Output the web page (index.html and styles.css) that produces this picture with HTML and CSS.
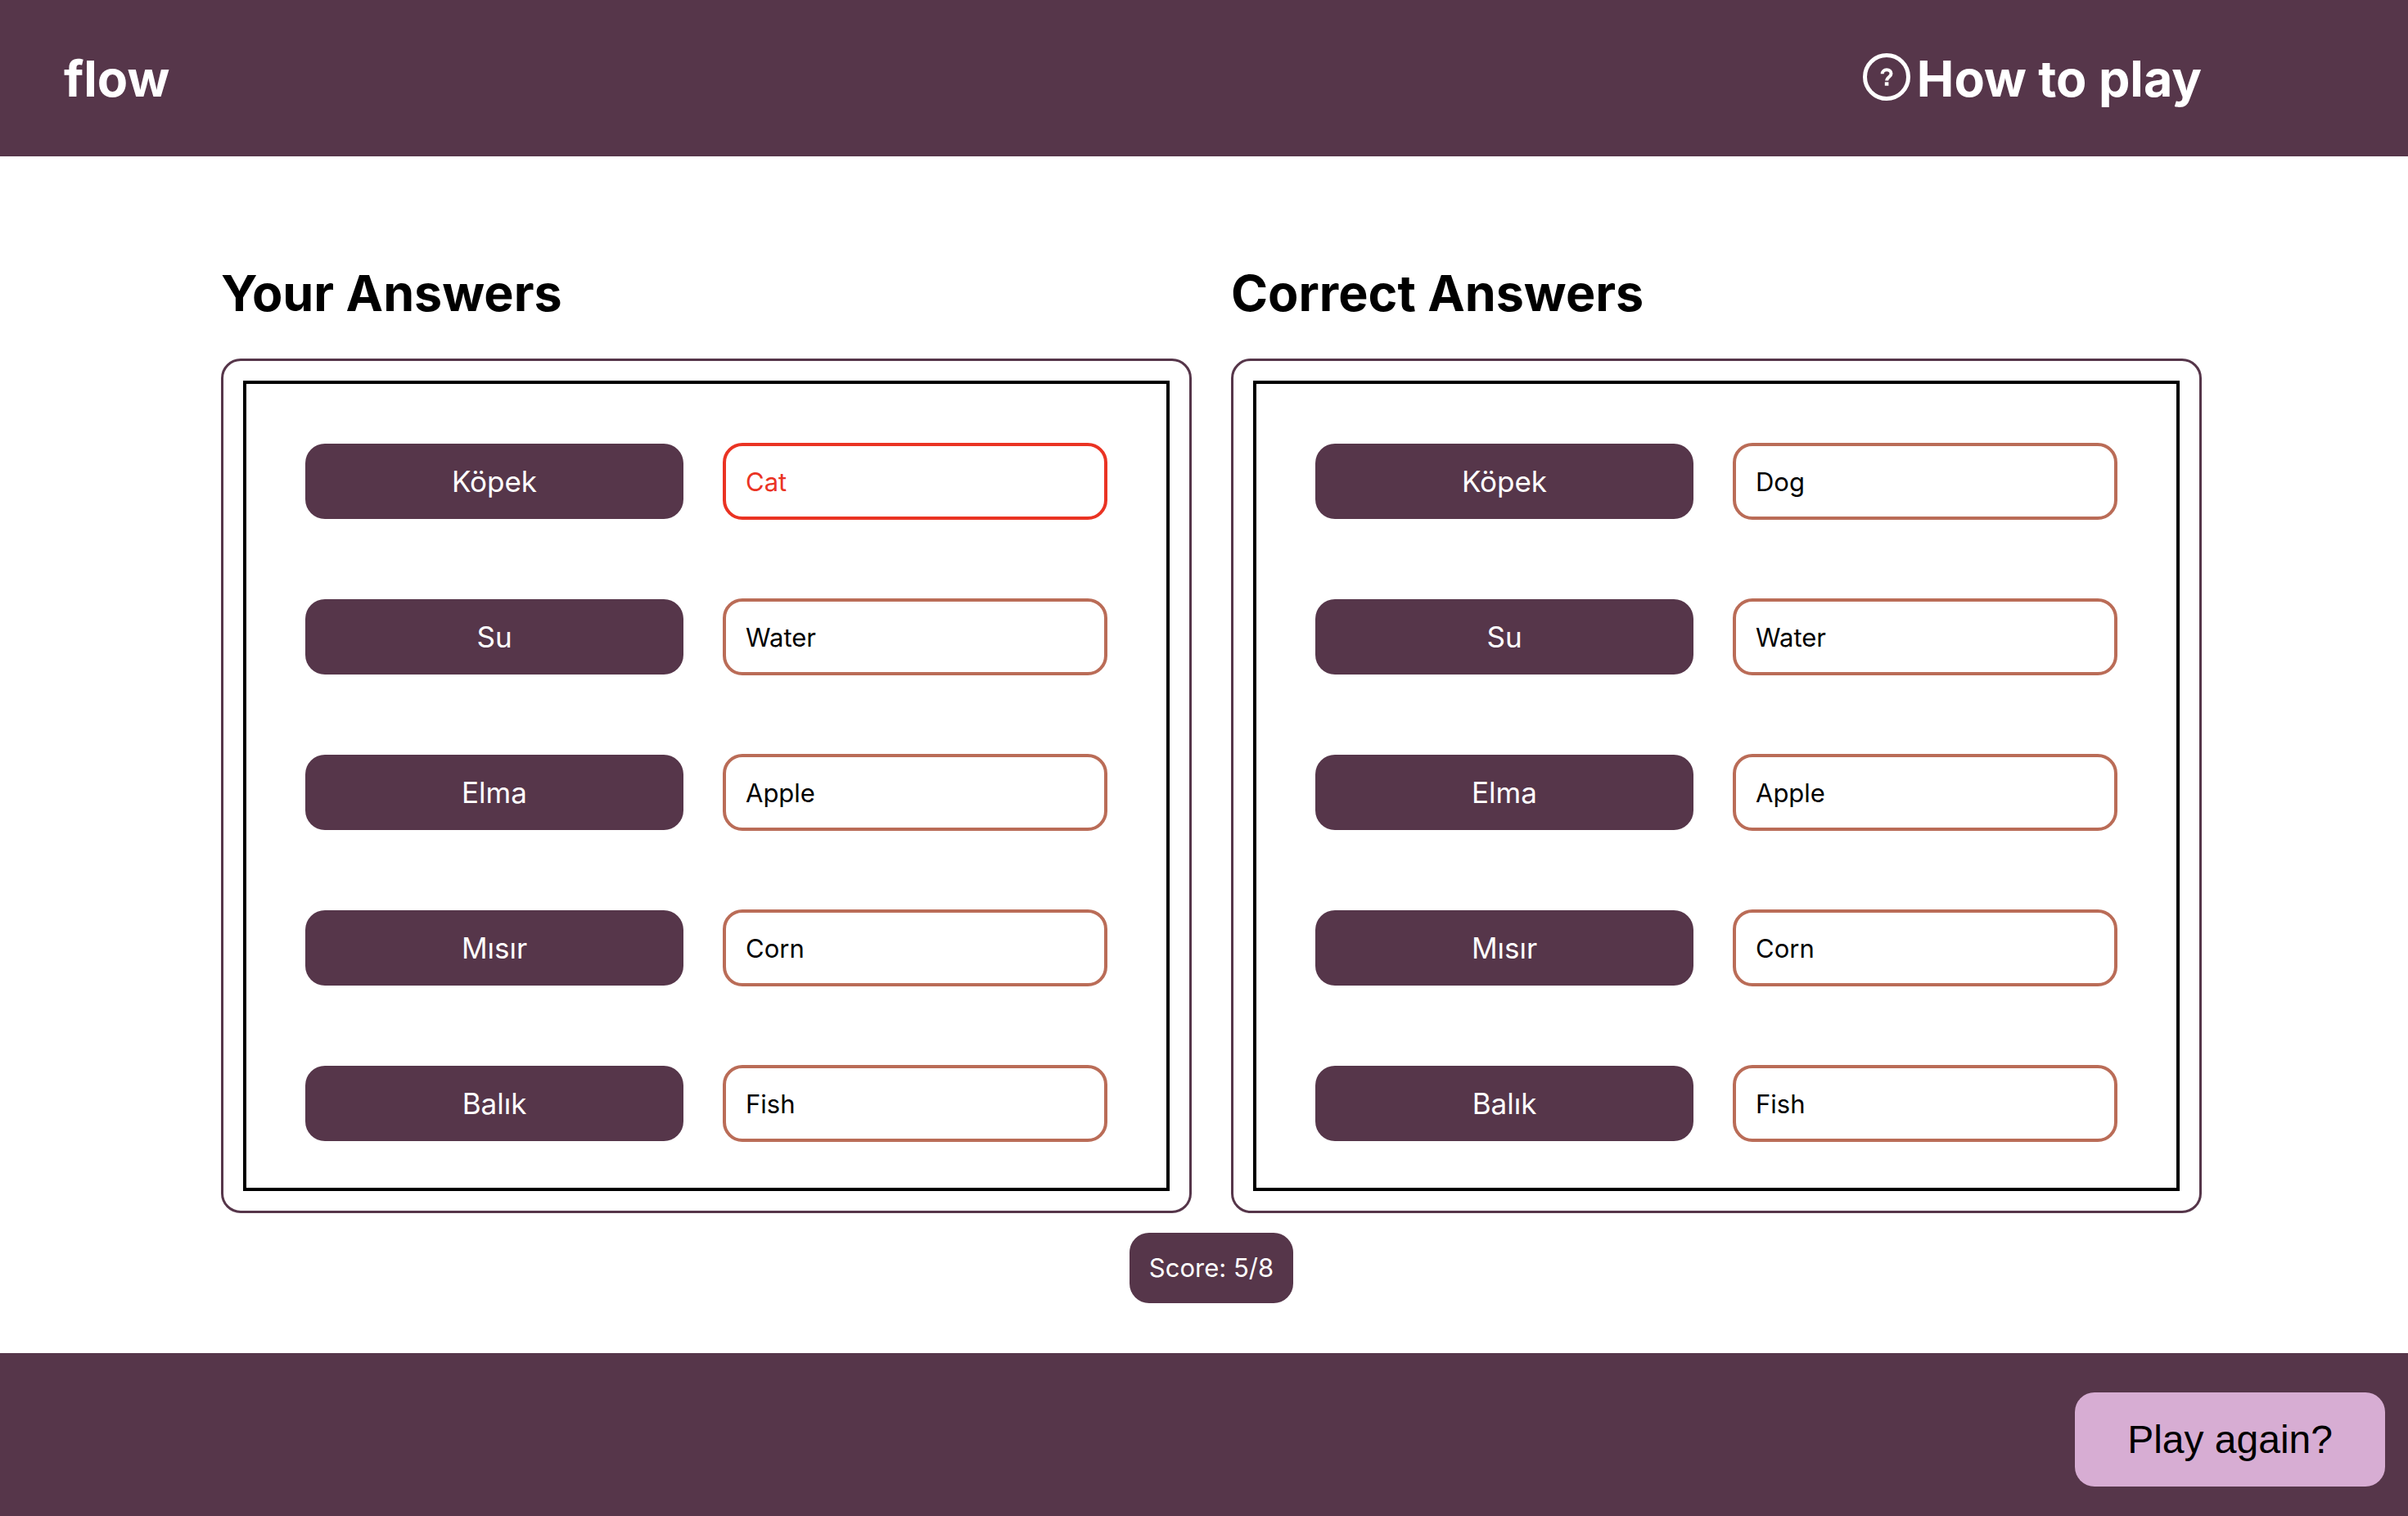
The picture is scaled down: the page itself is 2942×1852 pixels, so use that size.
FILE: index.html
```html
<!DOCTYPE html>
<html lang="en">
<head>
  <meta charset="utf-8">
  <meta name="viewport" content="width=device-width, initial-scale=1">
  <title>flow</title>
  <link rel="stylesheet" href="styles.css">
</head>
<body>
  <header class="site-header">
    <a class="brand" href="#">flow</a>
    <a class="help" href="#">
      <svg class="help-icon" viewBox="0 0 58 58" fill="none" stroke="currentColor" aria-hidden="true">
        <circle cx="29" cy="29" r="26.5" stroke-width="5"/>
        <path d="M23.7 25.3c0-3 2.2-5 5.4-5s5.4 1.9 5.4 4.7c0 4-5.3 4-5.3 8.6" stroke-width="4"/>
        <path d="M26.8 37.5h4.6" stroke-width="4.4"/>
      </svg>
      How to play
    </a>
  </header>

  <main class="results">
    <div class="columns">
      <section class="column">
        <h2 class="column-title">Your Answers</h2>
        <div class="panel">
          <div class="answers">
            <div class="pair"><label class="word" for="your-1">Köpek</label><input class="answer answer-wrong" id="your-1" value="Cat" readonly></div>
            <div class="pair"><label class="word" for="your-2">Su</label><input class="answer" id="your-2" value="Water" readonly></div>
            <div class="pair"><label class="word" for="your-3">Elma</label><input class="answer" id="your-3" value="Apple" readonly></div>
            <div class="pair"><label class="word" for="your-4">Mısır</label><input class="answer" id="your-4" value="Corn" readonly></div>
            <div class="pair"><label class="word" for="your-5">Balık</label><input class="answer" id="your-5" value="Fish" readonly></div>
          </div>
        </div>
      </section>
      <section class="column">
        <h2 class="column-title">Correct Answers</h2>
        <div class="panel">
          <div class="answers">
            <div class="pair"><label class="word" for="correct-1">Köpek</label><input class="answer" id="correct-1" value="Dog" readonly></div>
            <div class="pair"><label class="word" for="correct-2">Su</label><input class="answer" id="correct-2" value="Water" readonly></div>
            <div class="pair"><label class="word" for="correct-3">Elma</label><input class="answer" id="correct-3" value="Apple" readonly></div>
            <div class="pair"><label class="word" for="correct-4">Mısır</label><input class="answer" id="correct-4" value="Corn" readonly></div>
            <div class="pair"><label class="word" for="correct-5">Balık</label><input class="answer" id="correct-5" value="Fish" readonly></div>
          </div>
        </div>
      </section>
    </div>
    <p class="score">Score: 5/8</p>
  </main>

  <footer class="site-footer">
    <button class="play-again" type="button">Play again?</button>
  </footer>
</body>
</html>
```
FILE: styles.css
```css
:root {
  --plum: #56364a;
  --lilac: #d7add3;
  --clay: #ba6c57;
  --red: #ea3323;
}

* {
  box-sizing: border-box;
}

body {
  display: flex;
  flex-direction: column;
  min-height: 100vh;
  margin: 0;
  background: #fff;
  color: #000;
  font-family: Inter, "Liberation Sans", sans-serif;
  font-size: 31px;
}

.site-header {
  display: flex;
  align-items: center;
  justify-content: space-between;
  padding: 58px 252px 57px 78px;
  background: var(--plum);
  font-size: 61px;
  font-weight: 700;
  line-height: 76px;
}

.brand,
.help {
  color: #fff;
  text-decoration: none;
}

.help {
  display: flex;
  align-items: flex-start;
  gap: 8px;
}

.help-icon {
  width: 58px;
  height: 58px;
  margin-top: 7px;
}

.results {
  display: flex;
  flex: 1;
  flex-direction: column;
  align-items: center;
  gap: 24px;
  padding: 129px 252px 48px 270px;
}

.columns {
  display: flex;
  gap: 48px;
  width: 100%;
}

.column {
  flex: 1;
  min-width: 0;
}

.column-title {
  margin: 0 0 42px;
  font-size: 61px;
  font-weight: 700;
  line-height: 76px;
}

.panel {
  padding: 24px;
  border: 3px solid var(--plum);
  border-radius: 24px;
}

.answers {
  display: flex;
  flex-direction: column;
  gap: 96px;
  padding: 72px 72px 56px;
  border: 4px solid #000;
}

.pair {
  display: flex;
  align-items: center;
  gap: 48px;
}

.word,
.answer {
  flex: 1;
  min-width: 0;
  padding: 24px;
  border-radius: 24px;
}

.word {
  background: var(--plum);
  color: #fff;
  font-size: 35px;
  line-height: 44px;
  text-align: center;
}

.answer {
  height: 94px;
  border: 4px solid var(--clay);
  background: #fff;
  color: #000;
  font: inherit;
  outline: 0;
}

.answer-wrong {
  border-color: var(--red);
  color: var(--red);
}

.score {
  margin: 0;
  padding: 24px;
  border-radius: 24px;
  background: var(--plum);
  color: #fff;
  line-height: 38px;
}

.site-footer {
  display: flex;
  justify-content: flex-end;
  padding: 48px 28px 36px;
  background: var(--plum);
}

.play-again {
  padding: 30px 64px;
  border: 0;
  border-radius: 24px;
  background: var(--lilac);
  color: #000;
  font-family: "Liberation Sans", Arial, sans-serif;
  font-size: 48px;
  line-height: 55px;
}
```
